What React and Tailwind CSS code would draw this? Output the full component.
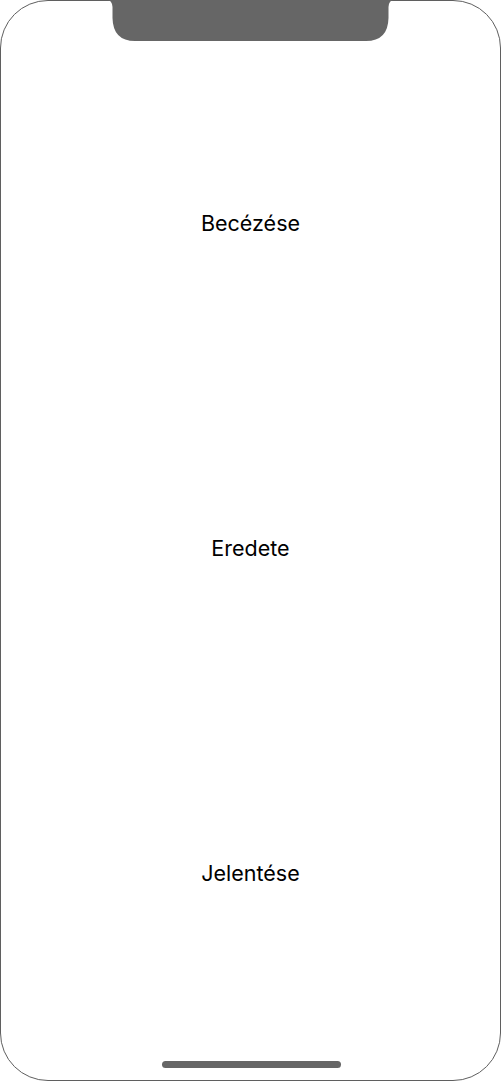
import React from "react";

export default function App() {
  const items = ["Becézése", "Eredete", "Jelentése"];
  return (
    <div className="relative w-[501px] h-[1081px] bg-white overflow-hidden">
      <div
        className="relative w-full h-full rounded-[48px] border border-[#5f5f5f] bg-white flex flex-col pt-[60px] pb-[44px]"
        style={{ fontFamily: "Inter, 'Noto Sans', sans-serif" }}
      >
        {items.map((t) => (
          <div key={t} className="flex-1 flex items-center justify-center">
            <span className="text-[21.5px] text-black leading-none">{t}</span>
          </div>
        ))}
        <div className="absolute left-[161px] top-[1060px] w-[179px] h-[7px] rounded-full bg-[#666666]" />
      </div>
      <svg
        className="absolute left-0 top-0"
        width="501"
        height="45"
        viewBox="0 0 501 45"
      >
        <path
          d="M107 0 Q112 0 112.5 7 L112.5 18 Q113 41 135 41 L366 41 Q388 41 388.5 18 L388.5 7 Q389 0 394 0 Z"
          fill="#666666"
        />
      </svg>
    </div>
  );
}
